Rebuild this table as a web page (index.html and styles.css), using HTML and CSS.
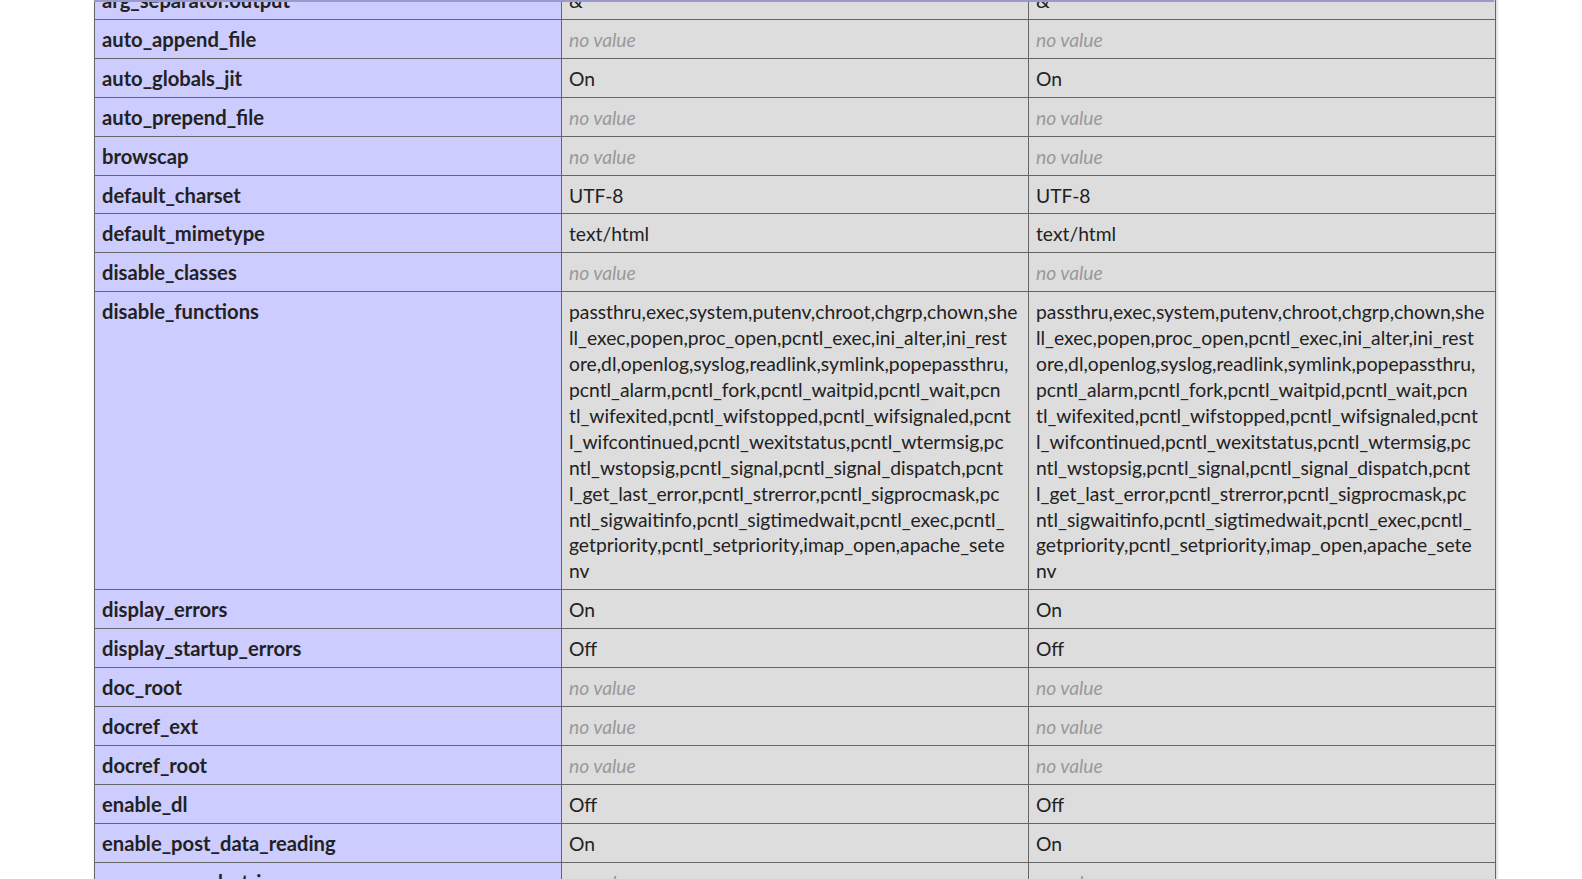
FILE: index.html
```html
<!DOCTYPE html>
<html>
<head>
<meta charset="utf-8">
<link rel="stylesheet" href="styles.css">
</head>
<body>
<div class="viewport">
  <div class="sticky-bar"></div>
  <table class="ini">
    <tr><td class="e">arg_separator.output</td><td class="v">&amp;</td><td class="v">&amp;</td></tr>
    <tr><td class="e">auto_append_file</td><td class="v"><i>no value</i></td><td class="v"><i>no value</i></td></tr>
    <tr><td class="e">auto_globals_jit</td><td class="v">On</td><td class="v">On</td></tr>
    <tr><td class="e">auto_prepend_file</td><td class="v"><i>no value</i></td><td class="v"><i>no value</i></td></tr>
    <tr><td class="e">browscap</td><td class="v"><i>no value</i></td><td class="v"><i>no value</i></td></tr>
    <tr><td class="e">default_charset</td><td class="v">UTF-8</td><td class="v">UTF-8</td></tr>
    <tr><td class="e">default_mimetype</td><td class="v">text/html</td><td class="v">text/html</td></tr>
    <tr><td class="e">disable_classes</td><td class="v"><i>no value</i></td><td class="v"><i>no value</i></td></tr>
    <tr><td class="e">disable_functions</td>
      <td class="v">passthru,exec,system,putenv,chroot,chgrp,chown,she<br>ll_exec,popen,proc_open,pcntl_exec,ini_alter,ini_rest<br>ore,dl,openlog,syslog,readlink,symlink,popepassthru,<br>pcntl_alarm,pcntl_fork,pcntl_waitpid,pcntl_wait,pcn<br>tl_wifexited,pcntl_wifstopped,pcntl_wifsignaled,pcnt<br>l_wifcontinued,pcntl_wexitstatus,pcntl_wtermsig,pc<br>ntl_wstopsig,pcntl_signal,pcntl_signal_dispatch,pcnt<br>l_get_last_error,pcntl_strerror,pcntl_sigprocmask,pc<br>ntl_sigwaitinfo,pcntl_sigtimedwait,pcntl_exec,pcntl_<br>getpriority,pcntl_setpriority,imap_open,apache_sete<br>nv</td>
      <td class="v">passthru,exec,system,putenv,chroot,chgrp,chown,she<br>ll_exec,popen,proc_open,pcntl_exec,ini_alter,ini_rest<br>ore,dl,openlog,syslog,readlink,symlink,popepassthru,<br>pcntl_alarm,pcntl_fork,pcntl_waitpid,pcntl_wait,pcn<br>tl_wifexited,pcntl_wifstopped,pcntl_wifsignaled,pcnt<br>l_wifcontinued,pcntl_wexitstatus,pcntl_wtermsig,pc<br>ntl_wstopsig,pcntl_signal,pcntl_signal_dispatch,pcnt<br>l_get_last_error,pcntl_strerror,pcntl_sigprocmask,pc<br>ntl_sigwaitinfo,pcntl_sigtimedwait,pcntl_exec,pcntl_<br>getpriority,pcntl_setpriority,imap_open,apache_sete<br>nv</td></tr>
    <tr><td class="e">display_errors</td><td class="v">On</td><td class="v">On</td></tr>
    <tr><td class="e">display_startup_errors</td><td class="v">Off</td><td class="v">Off</td></tr>
    <tr><td class="e">doc_root</td><td class="v"><i>no value</i></td><td class="v"><i>no value</i></td></tr>
    <tr><td class="e">docref_ext</td><td class="v"><i>no value</i></td><td class="v"><i>no value</i></td></tr>
    <tr><td class="e">docref_root</td><td class="v"><i>no value</i></td><td class="v"><i>no value</i></td></tr>
    <tr><td class="e">enable_dl</td><td class="v">Off</td><td class="v">Off</td></tr>
    <tr><td class="e">enable_post_data_reading</td><td class="v">On</td><td class="v">On</td></tr>
    <tr><td class="e">error_append_string</td><td class="v"><i>no value</i></td><td class="v"><i>no value</i></td></tr>
  </table>
</div>
</body>
</html>
```
FILE: styles.css
```css
html, body {
  margin: 0;
  padding: 0;
  background: #fff;
}
body {
  font-family: Lato, "Liberation Sans", sans-serif;
  color: #222;
  overflow: hidden;
}
.viewport {
  position: relative;
  height: 879px;
  overflow: hidden;
}
.sticky-bar {
  position: absolute;
  top: 0;
  left: 94px;
  width: 1400px;
  height: 2px;
  background: #99c;
  z-index: 2;
}
.ini {
  border-collapse: collapse;
  table-layout: fixed;
  width: 1400px;
  margin: -20px 0 0 94px;
  box-shadow: 1px 2px 3px #ccc;
}
.ini td {
  border: 1px solid #666;
  font-size: 19.3px;
  line-height: 25.9px;
  padding: 7px 7px 5px;
  vertical-align: baseline;
  width: 452px;
}
.ini td.e {
  background: #ccf;
  font-weight: bold;
  font-size: 20.2px;
}
.ini td.v {
  background: #ddd;
  white-space: nowrap;
}
.ini td.v i {
  color: #999;
}
```
